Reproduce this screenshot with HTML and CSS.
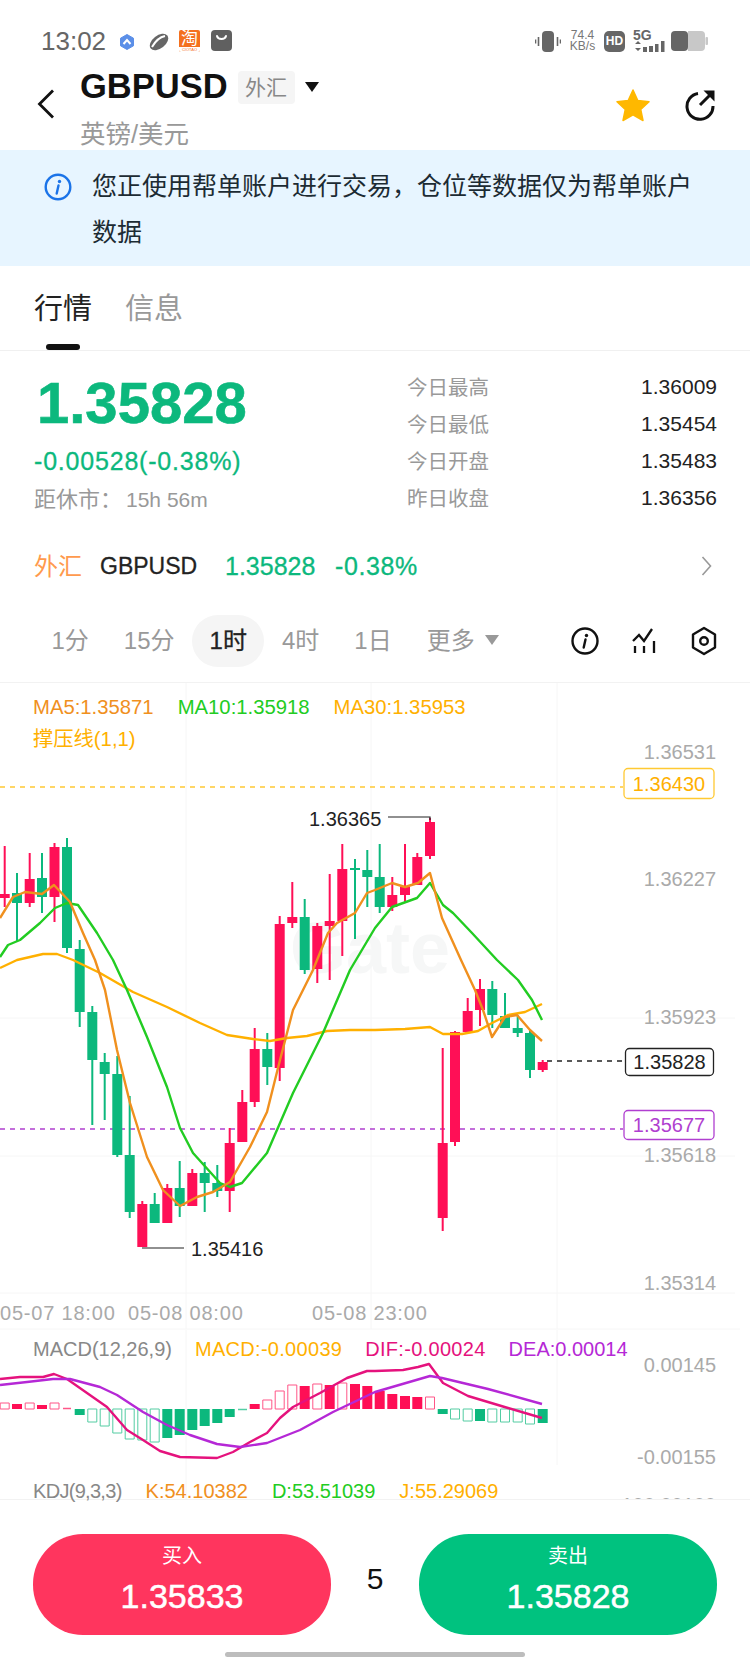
FILE: index.html
```html
<!DOCTYPE html>
<html lang="zh">
<head>
    <meta charset="UTF-8">
    <title>GBPUSD</title>
    <meta name="viewport" content="width=device-width, initial-scale=1">
    <link rel="stylesheet" href="styles.css">
</head>
<body>
<div class="page">

    <!-- status bar -->
    <div class="status">
        <span class="time">13:02</span>
        <svg class="st-app" width="16" height="16" viewBox="0 0 16 16"><path d="M8 .5l6.5 3.7v7.6L8 15.5l-6.5-3.7V4.200z" fill="#5b8fe8" stroke="#5b8fe8" stroke-linejoin="round"/><path d="M4.500 10L8 6l3.500 4" fill="none" stroke="#fff" stroke-width="2"/></svg>
        <svg class="st-app st-leaf" width="22" height="18" viewBox="0 0 22 18"><ellipse cx="11" cy="9" rx="10.500" ry="6.500" fill="#666" transform="rotate(-38 11 9)"/><path d="M4 14C8 7 12 4 17 3" fill="none" stroke="#fff" stroke-width="2"/></svg>
        <span class="st-tao">淘<i>CIOTAO</i></span>
        <svg class="st-bag" width="21" height="21" viewBox="0 0 21 21"><rect width="21" height="21" rx="4" fill="#606060"/><path d="M6 6c1 4 8 4 9 0" fill="none" stroke="#fff" stroke-width="2" stroke-linecap="round"/></svg>

        <div class="st-right">
            <svg width="26" height="21" viewBox="0 0 26 21"><rect x="7" y="0" width="12" height="21" rx="4" fill="#666"/><path d="M3.500 6v9M.5 8.500v4M22.500 6v9M25.500 8.500v4" stroke="#666" stroke-width="1.600" fill="none"/></svg>
            <div class="st-speed"><span>74.4</span><span>KB/s</span></div>
            <span class="st-hd">HD</span>
            <div class="st-net">
                <span class="st-5g">5G</span>
                <svg width="32" height="11" viewBox="0 0 32 11"><path d="M2 3l3-3 3 3zM2 7h6l-3 3z" fill="#666"/><path d="M10 6h4v5h-4zM16 5h4v6h-4zM22 3h3.500v8H22zM28 0h3.500v11H28z" fill="#666"/></svg>
            </div>
            <svg width="37" height="20" viewBox="0 0 37 20"><rect width="17" height="20" rx="4" fill="#666"/><path d="M17 0h13a4 4 0 0 1 4 4v12a4 4 0 0 1-4 4H17z" fill="#c8c8c8"/><rect x="34.500" y="6" width="2.500" height="8" rx="1" fill="#c8c8c8"/></svg>
        </div>
    </div>

    <!-- header -->
    <div class="header">
        <svg class="back" width="18" height="30" viewBox="0 0 18 30"><path d="M16 1.500L2.500 15 16 28.500" fill="none" stroke="#111" stroke-width="2.800"/></svg>
        <div class="title-col">
            <div class="title-row">
                <span class="title">GBPUSD</span>
                <span class="title-tag">外汇</span>
                <span class="caret"></span>
            </div>
            <div class="subtitle">英镑/美元</div>
        </div>
        <div class="actions">
            <svg width="36" height="34" viewBox="0 0 36 34"><path d="M18 2l4.800 10.500 11.200 1.300-8.300 7.700 2.300 11-10-5.700-10 5.700 2.300-11L2 13.800l11.200-1.300z" fill="#ffb800" stroke="#ffb800" stroke-width="1.500" stroke-linejoin="round"/></svg>
            <svg width="32" height="32" viewBox="0 0 32 32"><path d="M14 4.500A13 13 0 1 0 29 17" fill="none" stroke="#111" stroke-width="3"/><path d="M16 16L28 4" stroke="#111" stroke-width="3" fill="none"/><path d="M19.500 1.500h11v11z" fill="#111"/></svg>
        </div>
    </div>

    <!-- notice -->
    <div class="notice">
        <svg class="notice-icon" width="28" height="28" viewBox="0 0 28 28"><circle cx="14" cy="14" r="12.300" fill="none" stroke="#1a73e8" stroke-width="2.400"/><circle cx="15.500" cy="8.500" r="1.700" fill="#1a73e8"/><path d="M14.500 12.500l-1.800 8" stroke="#1a73e8" stroke-width="2.400" stroke-linecap="round" fill="none"/></svg>
        <p>您正使用帮单账户进行交易，仓位等数据仅为帮单账户数据</p>
    </div>

    <!-- tabs -->
    <div class="tabs">
        <div class="tab tab-on">行情</div>
        <div class="tab">信息</div>
    </div>

    <!-- quote -->
    <div class="quote">
        <div class="quote-left">
            <div class="price">1.35828</div>
            <div class="change">-0.00528(-0.38%)</div>
            <div class="closing">距休市：<span>15h 56m</span></div>
        </div>
        <div class="stats">
            <div class="stat"><span>今日最高</span><b>1.36009</b></div>
            <div class="stat"><span>今日最低</span><b>1.35454</b></div>
            <div class="stat"><span>今日开盘</span><b>1.35483</b></div>
            <div class="stat"><span>昨日收盘</span><b>1.36356</b></div>
        </div>
    </div>

    <!-- symbol row -->
    <div class="symbol">
        <span class="sym-type">外汇</span>
        <span class="sym-name">GBPUSD</span>
        <span class="sym-price">1.35828</span>
        <span class="sym-pct">-0.38%</span>
        <svg class="sym-more" width="11" height="22" viewBox="0 0 11 22"><path d="M1.500 2l8 9-8 9" fill="none" stroke="#999" stroke-width="1.600"/></svg>
    </div>

    <!-- periods -->
    <div class="periods">
        <div class="period">1分</div>
        <div class="period">15分</div>
        <div class="period period-on">1时</div>
        <div class="period">4时</div>
        <div class="period">1日</div>
        <div class="period">更多<span class="more-caret"></span></div>
        <div class="tools">
            <svg width="28" height="28" viewBox="0 0 28 28"><circle cx="14" cy="14" r="12.500" fill="none" stroke="#111" stroke-width="2.400"/><circle cx="15.500" cy="8.500" r="1.700" fill="#111"/><path d="M14.500 12.500l-1.800 8" stroke="#111" stroke-width="2.400" stroke-linecap="round" fill="none"/></svg>
            <svg width="26" height="28" viewBox="0 0 26 28"><path d="M1 14l6-6 5 6 8-12" fill="none" stroke="#111" stroke-width="2.300"/><path d="M3 19v7M12 19v7M22 14v12" stroke="#111" stroke-width="2.300" fill="none"/></svg>
            <svg width="26" height="30" viewBox="0 0 26 30"><path d="M13 2l11 6.500v13L13 28 2 21.500v-13z" fill="none" stroke="#111" stroke-width="2.400" stroke-linejoin="round"/><circle cx="13" cy="15" r="3.800" fill="none" stroke="#111" stroke-width="2.400"/></svg>
        </div>
    </div>

    <!-- chart, svg y values are page y values -->
    <div class="chart">
        <svg class="plot" width="750" height="816" viewBox="0 683 750 816">
            <path class="grid" d="M186 683V1329M371 683V1329M557 683V1329M186 1330V1499M557 1330V1465M0 1018H735M0 1156H735M0 1293H735M0 1329H740"/>
            <text class="mark" x="290" y="973">Gate</text>

            <path class="dash-y" d="M0 787H623"/>
            <path class="dash-p" d="M0 1129H623"/>
            <path class="dash-k" d="M547 1061H625"/>

            <path class="wick up" d="M4.700 846V907M29.700 853V907M54.500 843V922M142.300 1201V1247M167.300 1184V1223M192.300 1169V1206M229.700 1128V1212M242.300 1090V1142M254.700 1028V1107M279.700 916V1081M292.300 882V928M317.300 923V983M329.700 874V980M342.300 844V956M392.300 877V911M405 844V902M417.300 853V885M430 818V859M442.700 1048V1231M455 1031V1146M467.700 998V1032M480 979V1026M542.700 1060V1072"/>
            <path class="body up" d="M4.700 894V898M29.700 879V903M54.500 847V897M142.300 1204V1247M167.300 1188V1223M192.300 1173V1206M229.700 1143V1191M242.300 1102V1142M254.700 1049V1102M279.700 924V1068M292.300 917V923M317.300 926V969M329.700 921V926M342.300 869V921M392.300 895V907M405 887V895M417.300 857V885M430 822V856M442.700 1143V1218M455 1032V1142M467.700 1011V1032M480 989V1010M542.700 1062V1070"/>
            <path class="wick down" d="M17 873V941M42 853V913M67 838V953M79.700 940V1027M92.300 1006V1125M104.700 1053V1120M117.300 1056V1157M129.700 1096V1218M154.700 1193V1223M179.700 1161V1217M204.700 1162V1212M217.300 1165V1197M267.300 1033V1085M304.700 899V974M355 859V939M367.300 850V907M379.700 844V913M492.300 981V1028M505 993V1028M517.700 1015V1037M530 1030V1078"/>
            <path class="body down" d="M17 893V903M42 878V897M67 847V948M79.700 949V1012M92.300 1012V1060M104.700 1062V1074M117.300 1074V1155M129.700 1155V1212M154.700 1204V1223M179.700 1188V1206M204.700 1173V1183M217.300 1183V1191M267.300 1049V1067M304.700 917V970M355 868V870M367.300 870V877M379.700 877V907M492.300 989V1015M505 1016V1028M517.700 1028V1033M530 1033V1070"/>

            <polyline class="line ma30" points="0,968 17,960 43,954 57,954 73,960 100,973 133,992 167,1007 200,1023 227,1035 253,1039 270,1041 287,1038 307,1036 327,1031 350,1030 375,1030 405,1029 430,1027 443,1034 462,1034 478,1031 492,1023 508,1015 525,1012 542,1004"/>
            <polyline class="line ma10" points="0,957 8,945 20,940 40,923 55,908 67,903 78,905 97,933 113,960 127,990 147,1037 167,1087 180,1128 193,1153 220,1183 230,1187 242,1183 267,1153 293,1093 323,1033 350,970 375,928 392,907 417,898 430,883 443,905 453,913 472,933 497,960 518,980 532,1000 542,1020"/>
            <polyline class="line ma5" points="0,918 13,897 25,892 42,894 54,885 70,902 83,933 95,960 105,990 117,1050 130,1103 147,1157 163,1190 180,1206 197,1197 213,1192 230,1182 250,1147 267,1112 280,1060 293,1010 313,970 328,933 337,923 355,913 367,893 375,890 392,883 405,887 418,883 430,873 442,918 461,960 475,990 483,1010 492,1037 505,1017 517,1015 530,1030 542,1041"/>

            <text class="num dark" x="309" y="826">1.36365</text>
            <path class="mark-line" d="M388 817H430V820"/>
            <text class="num dark" x="191" y="1256">1.35416</text>
            <path class="mark-line" d="M142 1248H184"/>

            <text class="num axis" x="716" y="759">1.36531</text>
            <text class="num axis" x="716" y="886">1.36227</text>
            <text class="num axis" x="716" y="1024">1.35923</text>
            <text class="num axis" x="716" y="1162">1.35618</text>
            <text class="num axis" x="716" y="1290">1.35314</text>

            <rect class="tag tag-y" x="624" y="768.500" width="90" height="30" rx="4"/>
            <text class="num tag-text fill-y" x="669" y="791">1.36430</text>
            <rect class="tag tag-k" x="625.500" y="1048.500" width="88" height="27" rx="4"/>
            <text class="num tag-text fill-k" x="669.500" y="1069">1.35828</text>
            <rect class="tag tag-p" x="624" y="1110.500" width="90" height="29" rx="4"/>
            <text class="num tag-text fill-p" x="669" y="1132">1.35677</text>

            <text class="num date" x="0" y="1320">05-07 18:00</text>
            <text class="num date" x="128" y="1320">05-08 08:00</text>
            <text class="num date" x="312" y="1320">05-08 23:00</text>

            <!-- macd -->
            <path class="body up" d="M17 1404V1409M42 1405V1409M254.700 1404V1409M304.700 1386V1409M329.700 1385V1409M355 1384V1409M367.300 1386V1409M379.700 1391V1409M392.300 1394V1409M405 1396V1409M417.300 1397V1409"/>
            <path class="hollow up" d="M.2 1403h9v6h-9zM25.200 1403h9v6h-9zM50 1403h9v6h-9zM262.800 1400h9v9h-9zM275.200 1391h9v18h-9zM287.800 1385h9v24h-9zM312.800 1384h9v25h-9zM337.800 1383h9v26h-9zM425.500 1397h9v12h-9z"/>
            <path class="thin up" d="M63 1408.500h8"/>
            <path class="body down" d="M79.700 1409V1415M167.300 1409V1438M179.700 1409V1435M192.300 1409V1430M204.700 1409V1426M217.300 1409V1423M229.700 1409V1417M442.700 1409V1414M480 1409V1421M542.700 1409V1423"/>
            <path class="hollow down" d="M87.800 1409h9v13h-9zM100.200 1409h9v17h-9zM112.800 1409h9v24h-9zM125.200 1409h9v30h-9zM137.800 1409h9v31h-9zM150.200 1409h9v33h-9zM450.500 1409h9v10h-9zM463.200 1409h9v12h-9zM487.800 1409h9v13h-9zM500.500 1409h9v13h-9zM513.200 1409h9v13h-9zM525.500 1409h9v15h-9z"/>
            <path class="thin down" d="M238 1409.500h9"/>

            <polyline class="line dif" points="0,1379 20,1377 43,1377 54,1374 67,1379 87,1393 107,1407 127,1430 143,1440 160,1451 180,1457 217,1458 233,1452 250,1442 267,1433 280,1418 293,1407 320,1393 347,1378 367,1371 375,1371 403,1370 418,1367 429,1364 443,1383 468,1396 508,1408 542,1418"/>
            <polyline class="line dea" points="0,1385 27,1382 53,1379 70,1379 100,1387 117,1395 143,1412 167,1425 190,1435 217,1444 240,1447 267,1443 300,1430 333,1412 375,1392 430,1376 442,1378 488,1389 542,1404"/>

            <text class="num axis" x="716" y="1372">0.00145</text>
            <text class="num axis" x="716" y="1464">-0.00155</text>
            <text class="num axis" x="716" y="1512">100.00100</text>
        </svg>

        <div class="legend legend-ma">
            <span class="c-ma5">MA5:1.35871</span>
            <span class="c-ma10">MA10:1.35918</span>
            <span class="c-ma30">MA30:1.35953</span>
        </div>
        <div class="legend legend-line"><span class="c-ma30">撑压线(1,1)</span></div>
        <div class="legend legend-macd">
            <span class="c-grey">MACD(12,26,9)</span>
            <span class="c-ma30 wide">MACD:-0.00039</span>
            <span class="c-dif wide">DIF:-0.00024</span>
            <span class="c-dea">DEA:0.00014</span>
        </div>
        <div class="legend legend-kdj">
            <span class="c-grey narrow">KDJ(9,3,3)</span>
            <span class="c-ma5">K:54.10382</span>
            <span class="c-ma10">D:53.51039</span>
            <span class="c-ma30">J:55.29069</span>
        </div>
    </div>

    <!-- bottom bar -->
    <div class="bottom">
        <div class="trade">
            <div class="btn btn-buy"><span>买入</span><b>1.35833</b></div>
            <div class="lots">5</div>
            <div class="btn btn-sell"><span>卖出</span><b>1.35828</b></div>
        </div>
        <div class="home"></div>
    </div>

</div>
</body>
</html>
```

FILE: styles.css
```css
* {
    box-sizing: border-box;
}
body {
    margin: 0;
    background: #fff;
    font-family: "Liberation Sans", "Noto Sans CJK SC", sans-serif;
    color: #222;
}
.page {
    width: 750px;
    height: 1659px;
    overflow: hidden;
}

/* status bar */
.status {
    height: 62px;
    padding: 30px 42px 0 41px;
    display: flex;
    align-items: flex-start;
}
.time {
    font-size: 26px;
    line-height: 22px;
    color: #666;
    width: 78px;
}
.st-app {
    margin-top: 4px;
    margin-right: 13px;
}
.st-leaf {
    margin-top: 3px;
    margin-right: 9px;
}
.st-tao {
    width: 21px;
    height: 22px;
    background: #f4701e;
    border-radius: 2px;
    color: #fff;
    font-size: 17px;
    line-height: 17px;
    text-align: center;
    margin-right: 11px;
    position: relative;
    overflow: hidden;
}
.st-tao i {
    display: block;
    font-style: normal;
    font-size: 4px;
    line-height: 5px;
    background: #fff;
    color: #f4701e;
}
.st-right {
    margin-left: auto;
    display: flex;
    align-items: center;
    height: 22px;
    gap: 8px;
}
.st-speed {
    width: 27px;
    color: #777;
    font-size: 12px;
    line-height: 11px;
    text-align: center;
    display: flex;
    flex-direction: column;
    white-space: nowrap;
    align-items: center;
}
.st-hd {
    width: 21px;
    height: 21px;
    background: #666;
    border-radius: 5px;
    color: #fff;
    font-size: 12px;
    font-weight: bold;
    line-height: 21px;
    text-align: center;
}
.st-net {
    width: 32px;
    margin-right: -2px;
    display: flex;
    flex-direction: column;
}
.st-5g {
    font-size: 14px;
    font-weight: bold;
    line-height: 11px;
    color: #666;
}

/* header */
.header {
    height: 88px;
    padding: 0 34px 0 37px;
    display: flex;
    align-items: flex-start;
}
.back {
    margin-top: 27px;
    margin-right: 25px;
}
.title-row {
    height: 48px;
    display: flex;
    align-items: center;
}
.title {
    font-size: 34.500px;
    font-weight: bold;
    color: #111;
    margin-right: 10px;
}
.title-tag {
    width: 57px;
    height: 33px;
    margin-top: 3px;
    background: #f5f5f5;
    border-radius: 4px;
    color: #888;
    font-size: 21px;
    line-height: 33px;
    text-align: center;
    margin-right: 10px;
}
.caret {
    width: 0;
    height: 0;
    border-left: 7px solid transparent;
    border-right: 7px solid transparent;
    border-top: 10px solid #111;
    margin-top: 2px;
}
.subtitle {
    margin-top: 10px;
    font-size: 25.500px;
    line-height: 28px;
    color: #999;
}
.actions {
    margin-left: auto;
    margin-top: 26px;
    display: flex;
    align-items: center;
    gap: 33px;
}

/* notice */
.notice {
    height: 116px;
    background: #e7f5ff;
    padding: 13px 50px 0 44px;
    display: flex;
    align-items: flex-start;
}
.notice-icon {
    margin-top: 10px;
    margin-right: 20px;
    flex-shrink: 0;
}
.notice p {
    margin: 0;
    font-size: 25px;
    line-height: 46px;
    color: #1c2b33;
}

/* tabs */
.tabs {
    height: 85px;
    padding: 0 34px;
    display: flex;
    gap: 33px;
    border-bottom: 1px solid #f0f0f0;
}
.tab {
    font-size: 29px;
    line-height: 86px;
    color: #999;
    position: relative;
}
.tab-on {
    color: #222;
}
.tab-on::after {
    content: "";
    position: absolute;
    left: 12px;
    right: 12px;
    bottom: 0;
    height: 6px;
    background: #111;
    border-radius: 3px;
}

/* quote */
.quote {
    height: 184px;
    padding: 0 33px 0 34px;
    display: flex;
    justify-content: space-between;
}
.price {
    margin: 23px 0 0 3px;
    font-size: 58px;
    font-weight: bold;
    line-height: 58px;
    color: #0cb87d;
    -webkit-text-stroke: .6px #0cb87d;
}
.change {
    margin-top: 14px;
    font-size: 25px;
    line-height: 30px;
    color: #0cb87d;
    letter-spacing: .8px;
    -webkit-text-stroke: .3px #0cb87d;
}
.closing {
    margin-top: 9px;
    font-size: 22px;
    line-height: 30px;
    color: #999;
    display: flex;
}
.closing span {
    margin-left: 4px;
    font-size: 21px;
}
.stats {
    width: 310px;
    padding-top: 17px;
}
.stat {
    height: 37px;
    display: flex;
    justify-content: space-between;
    align-items: center;
    font-size: 20.500px;
    color: #999;
}
.stat span {
    margin-top: -2px;
}
.stat b {
    font-weight: normal;
    font-size: 21px;
    color: #222;
}

/* symbol row */
.symbol {
    height: 62px;
    padding: 0 38px 0 34px;
    display: flex;
    align-items: center;
}
.sym-type {
    font-size: 24px;
    color: #ff9a4d;
    margin-right: 18px;
    margin-top: -3px;
}
.sym-name {
    font-size: 23px;
    color: #222;
    width: 125px;
    -webkit-text-stroke: .3px #222;
}
.sym-price,
.sym-pct {
    font-size: 25px;
    color: #0cb87d;
    -webkit-text-stroke: .3px #0cb87d;
}
.sym-price {
    width: 110px;
}
.sym-pct {
    letter-spacing: .6px;
}
.sym-more {
    margin-left: auto;
}

/* periods */
.periods {
    height: 86px;
    padding: 18px 33px 0 34px;
    display: flex;
    align-items: flex-start;
    border-bottom: 1px solid #f2f2f2;
}
.period {
    height: 52px;
    padding: 0 17.500px;
    font-size: 24px;
    line-height: 52px;
    color: #999;
    border-radius: 26px;
    display: flex;
    align-items: center;
}
.period-on {
    background: #f5f5f5;
    color: #222;
    -webkit-text-stroke: .3px #222;
}
.more-caret {
    width: 0;
    height: 0;
    border-left: 7px solid transparent;
    border-right: 7px solid transparent;
    border-top: 10px solid #999;
    margin-left: 10px;
    margin-top: -2px;
}
.tools {
    margin-left: auto;
    height: 52px;
    display: flex;
    align-items: center;
    gap: 33px;
}

/* chart */
.chart {
    height: 816px;
    position: relative;
}
.plot {
    display: block;
}
.grid {
    stroke: #f6f6f6;
    stroke-width: 1;
    fill: none;
}
.mark {
    font-family: "Liberation Sans", sans-serif;
    font-size: 72px;
    font-weight: bold;
    fill: #f6f7f7;
}
.dash-y,
.dash-p,
.dash-k {
    fill: none;
    stroke-width: 1.3;
    stroke-dasharray: 5 5;
}
.dash-y { stroke: #ffc933; }
.dash-p { stroke: #b03fd0; }
.dash-k { stroke: #222; }
.wick {
    fill: none;
    stroke-width: 2;
}
.body {
    fill: none;
    stroke-width: 10;
}
.hollow {
    fill: #fff;
    stroke-width: 1;
    opacity: .7;
}
.thin {
    fill: none;
    stroke-width: 1.5;
    opacity: .7;
}
.up { stroke: #ff0f56; }
.down { stroke: #0cb87d; }
.line {
    fill: none;
    stroke-width: 2.400;
    stroke-linejoin: round;
}
.ma5 { stroke: #f0901e; }
.ma10 { stroke: #22cc22; }
.ma30 { stroke: #ffb000; }
.dif { stroke: #e5127d; }
.dea { stroke: #b528d6; }
.num {
    font-family: "Liberation Sans", sans-serif;
    font-size: 20px;
}
.dark { fill: #222; }
.axis {
    fill: #aaa;
    text-anchor: end;
}
.date {
    fill: #aaa;
    letter-spacing: .8px;
}
.mark-line {
    fill: none;
    stroke: #222;
    stroke-width: 1.2;
}
.tag {
    fill: #fff;
    stroke-width: 1.3;
}
.tag-y { stroke: #ffc933; }
.tag-k { stroke: #222; }
.tag-p { stroke: #b03fd0; }
.tag-text { text-anchor: middle; }
.fill-y { fill: #ffb000; }
.fill-k { fill: #222; }
.fill-p { fill: #b03fd0; }

.legend {
    position: absolute;
    left: 33px;
    display: flex;
    font-size: 20.300px;
    line-height: 24px;
    white-space: nowrap;
}
.legend-ma {
    top: 12px;
    gap: 24px;
}
.legend-line {
    top: 44px;
}
.legend-macd {
    top: 654px;
    gap: 23px;
    font-size: 20px;
}
.legend-kdj {
    top: 800px;
    gap: 24px;
    font-size: 20px;
    line-height: 16px;
}
.wide {
    letter-spacing: .3px;
}
.narrow {
    letter-spacing: -.7px;
}
.c-ma5 { color: #f0901e; }
.c-ma10 { color: #22cc22; }
.c-ma30 { color: #ffb000; }
.c-dif { color: #e5127d; }
.c-dea { color: #b528d6; }
.c-grey { color: #888; }

/* bottom bar */
.bottom {
    height: 160px;
    background: #fff;
    border-top: 1px solid #f2f2f2;
    padding-top: 34px;
}
.trade {
    padding: 0 33px;
    display: flex;
    justify-content: space-between;
    align-items: center;
}
.btn {
    width: 298px;
    height: 101px;
    border-radius: 50px;
    color: #fff;
    display: flex;
    flex-direction: column;
    align-items: center;
    padding-top: 8px;
}
.btn span {
    font-size: 20px;
    line-height: 28px;
}
.btn b {
    font-size: 34px;
    font-weight: normal;
    line-height: 44px;
    margin-top: 4px;
    -webkit-text-stroke: .5px #fff;
}
.btn-buy { background: #ff355e; }
.btn-sell { background: #00c27f; }
.lots {
    font-size: 30px;
    color: #111;
    margin-bottom: 12px;
}
.home {
    width: 300px;
    height: 5px;
    margin: 17px auto 0;
    background: #bdbdbd;
    border-radius: 3px;
}
```
